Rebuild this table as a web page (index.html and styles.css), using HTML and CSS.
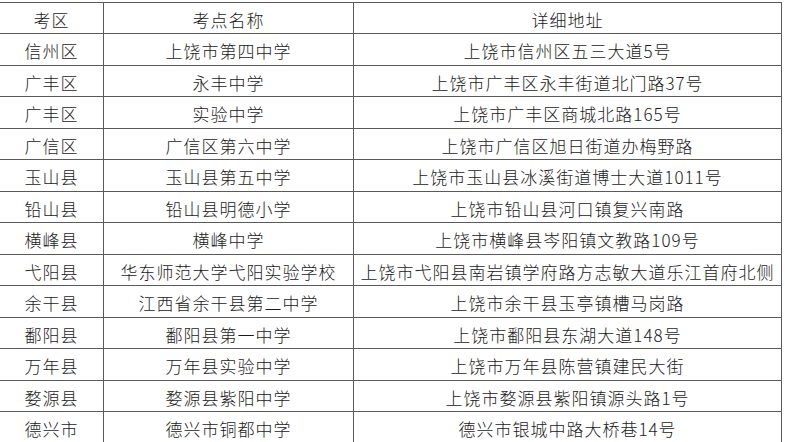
FILE: index.html
```html
<!DOCTYPE html>
<html lang="zh-CN">
<head>
<meta charset="utf-8">
<title>考点</title>
<link rel="stylesheet" href="styles.css">
</head>
<body>
<div class="table">
  <div class="row"><div class="cell">考区</div><div class="cell">考点名称</div><div class="cell">详细地址</div></div>
  <div class="row"><div class="cell">信州区</div><div class="cell">上饶市第四中学</div><div class="cell">上饶市信州区五三大道5号</div></div>
  <div class="row"><div class="cell">广丰区</div><div class="cell">永丰中学</div><div class="cell">上饶市广丰区永丰街道北门路37号</div></div>
  <div class="row"><div class="cell">广丰区</div><div class="cell">实验中学</div><div class="cell">上饶市广丰区商城北路165号</div></div>
  <div class="row"><div class="cell">广信区</div><div class="cell">广信区第六中学</div><div class="cell">上饶市广信区旭日街道办梅野路</div></div>
  <div class="row"><div class="cell">玉山县</div><div class="cell">玉山县第五中学</div><div class="cell">上饶市玉山县冰溪街道博士大道1011号</div></div>
  <div class="row"><div class="cell">铅山县</div><div class="cell">铅山县明德小学</div><div class="cell">上饶市铅山县河口镇复兴南路</div></div>
  <div class="row"><div class="cell">横峰县</div><div class="cell">横峰中学</div><div class="cell">上饶市横峰县岑阳镇文教路109号</div></div>
  <div class="row"><div class="cell">弋阳县</div><div class="cell">华东师范大学弋阳实验学校</div><div class="cell">上饶市弋阳县南岩镇学府路方志敏大道乐江首府北侧</div></div>
  <div class="row"><div class="cell">余干县</div><div class="cell">江西省余干县第二中学</div><div class="cell">上饶市余干县玉亭镇槽马岗路</div></div>
  <div class="row"><div class="cell">鄱阳县</div><div class="cell">鄱阳县第一中学</div><div class="cell">上饶市鄱阳县东湖大道148号</div></div>
  <div class="row"><div class="cell">万年县</div><div class="cell">万年县实验中学</div><div class="cell">上饶市万年县陈营镇建民大街</div></div>
  <div class="row"><div class="cell">婺源县</div><div class="cell">婺源县紫阳中学</div><div class="cell">上饶市婺源县紫阳镇源头路1号</div></div>
  <div class="row"><div class="cell">德兴市</div><div class="cell">德兴市铜都中学</div><div class="cell">德兴市银城中路大桥巷14号</div></div>
</div>
</body>
</html>
```
FILE: styles.css
```css
html, body {
  margin: 0;
  padding: 0;
  background: #ffffff;
}
body {
  font-family: "Noto Sans CJK SC", "Noto Sans", sans-serif;
  font-size: 17px;
  font-weight: 300;
  color: #1a1a1a;
  overflow: hidden;
}
.table {
  margin-top: 2px;
  width: 782px;
  border-top: 1px solid #5a5a5a;
}
.row {
  display: grid;
  grid-template-columns: 104px 250px 428px;
  height: 31px;
  box-sizing: border-box;
  border-bottom: 1px solid #5a5a5a;
}
.row:nth-child(even) {
  height: 32px;
}
.cell {
  border-right: 1px solid #5a5a5a;
  display: flex;
  align-items: center;
  justify-content: center;
  padding-top: 2px;
  box-sizing: border-box;
  letter-spacing: 1px;
  line-height: 1;
  white-space: nowrap;
}
```
